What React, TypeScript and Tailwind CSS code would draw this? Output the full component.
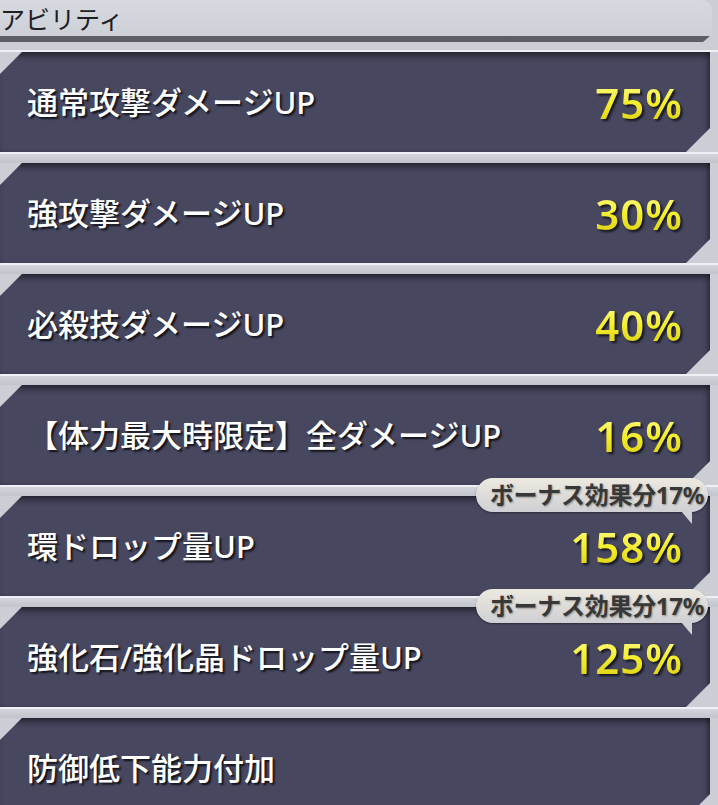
import React from 'react';

type Ability = { label: string; value?: string; bonus?: string };

const abilities: Ability[] = [
    { label: '通常攻撃ダメージUP', value: '75%' },
    { label: '強攻撃ダメージUP', value: '30%' },
    { label: '必殺技ダメージUP', value: '40%' },
    { label: '【体力最大時限定】全ダメージUP', value: '16%' },
    { label: '環ドロップ量UP', value: '158%', bonus: 'ボーナス効果分17%' },
    { label: '強化石/強化晶ドロップ量UP', value: '125%', bonus: 'ボーナス効果分17%' },
    { label: '防御低下能力付加' },
];

const jpFont = "font-['Noto_Sans','Noto_Sans_CJK_JP',sans-serif]";

// Bonus bubble that sits over the band above a row
const BonusTag: React.FC<{ text: string }> = ({ text }) => (
    <div className="absolute right-[10px] top-[-18px] z-10">
        <div
            className={`h-[34px] flex items-center pl-[14px] pr-[4px] rounded-full bg-linear-to-b from-[#ece9df] to-[#cfd0d4] shadow-[0_1px_2px_rgba(0,0,0,0.4)] text-[24px] leading-none font-bold tracking-[-0.3px] text-[#383838] [text-shadow:1px_1px_2px_rgba(0,0,0,0.35)] ${jpFont}`}
        >
            {text}
        </div>
        {/* little tail */}
        <div className="absolute right-[16px] top-[33px] w-[11px] h-[13px] bg-[#cfd0d4] [clip-path:polygon(0_0,100%_0,100%_100%)]" />
    </div>
);

const AbilityRow: React.FC<{ item: Ability }> = ({ item }) => (
    <div className="relative w-[718px] pr-[8px]">
        <div className="h-[100px] w-[710px] bg-[#474760] [clip-path:polygon(22px_0,100%_0,100%_calc(100%-24px),calc(100%-24px)_100%,0_100%,0_22px)] shadow-[inset_0_7px_6px_-3px_rgba(0,0,0,0.45),inset_-4px_0_4px_-1px_rgba(0,0,0,0.3)] flex items-center justify-between pl-[27px] pr-[27px]">
            <span className={`text-white text-[31px] font-medium [text-shadow:2px_2px_2px_rgba(0,0,0,0.75)] ${jpFont}`}>
                {item.label}
            </span>
            {item.value && (
                <span className="text-[42px] leading-none font-semibold tracking-[1px] font-['Noto_Sans','Roboto',sans-serif] bg-linear-to-b from-[#fdfb7a] via-[#f4ee2c] to-[#ddd012] bg-clip-text text-transparent [filter:drop-shadow(2px_2px_1px_rgba(0,0,0,0.7))] mt-[2px]">
                    {item.value}
                </span>
            )}
        </div>
        {item.bonus && <BonusTag text={item.bonus} />}
    </div>
);

export default function App() {
    return (
        <div className="w-[718px] h-[805px] overflow-hidden bg-[#cbced5] relative">
            {/* Header */}
            <div className="h-[36px] bg-linear-to-b from-[#d6d9df] to-[#cdd0d7] rounded-tr-[10px] mr-[6px] flex items-center">
                <span className={`text-[25px] leading-none text-[#1e1e24] mt-[3px] ${jpFont}`}>アビリティ</span>
            </div>
            <div className="h-[6px] w-[710px] bg-[#5d5f67] [clip-path:polygon(0_0,100%_0,calc(100%-7px)_100%,0_100%)]" />
            <div className="h-[10px] border-b-2 border-[#eef0f4]" />

            {/* Ability list */}
            <div className="flex flex-col">
                {abilities.map((item, i) => (
                    <React.Fragment key={i}>
                        {i > 0 && <div className="h-[11px] border-t-2 border-[#eef0f5] bg-linear-to-b from-[#d3d5dc] to-[#c2c4cc]" />}
                        <AbilityRow item={item} />
                    </React.Fragment>
                ))}
            </div>
        </div>
    );
}
